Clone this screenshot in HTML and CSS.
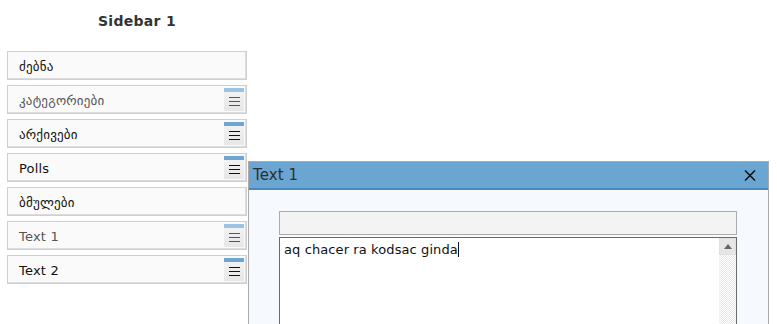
FILE: index.html
```html
<!DOCTYPE html>
<html>
<head>
<meta charset="utf-8">
<link rel="stylesheet" href="styles.css">
</head>
<body>
<div class="sidebar">
  <h2 class="title">Sidebar 1</h2>
  <ul class="widgets">
    <li class="widget"><span class="label">ძებნა</span></li>
    <li class="widget muted"><span class="label">კატეგორიები</span><span class="handle"><span class="bar"></span><span class="grip"><i></i><i></i><i></i></span></span></li>
    <li class="widget"><span class="label">არქივები</span><span class="handle"><span class="bar"></span><span class="grip"><i></i><i></i><i></i></span></span></li>
    <li class="widget"><span class="label">Polls</span><span class="handle"><span class="bar"></span><span class="grip"><i></i><i></i><i></i></span></span></li>
    <li class="widget"><span class="label">ბმულები</span></li>
    <li class="widget muted"><span class="label">Text 1</span><span class="handle"><span class="bar"></span><span class="grip"><i></i><i></i><i></i></span></span></li>
    <li class="widget"><span class="label">Text 2</span><span class="handle"><span class="bar"></span><span class="grip"><i></i><i></i><i></i></span></span></li>
  </ul>
</div>

<div class="dialog">
  <div class="dialog-head">
    <span class="dialog-title">Text 1</span>
    <svg class="close" width="12" height="11" viewBox="0 0 12 11"><path d="M1 0.5 L11 10.5 M11 0.5 L1 10.5" stroke="#111" stroke-width="1.5" fill="none"/></svg>
  </div>
  <div class="dialog-body">
    <div class="field"></div>
    <div class="area">
      <div class="area-text">aq chacer ra kodsac ginda<span class="caret"></span></div>
      <div class="scroll">
        <div class="scroll-up"><svg width="8" height="5" viewBox="0 0 8 5"><path d="M0 5 L4 0 L8 5 Z" fill="#666"/></svg></div>
        <div class="scroll-track"></div>
      </div>
    </div>
  </div>
</div>
</body>
</html>
```
FILE: styles.css
```css
html, body {
  margin: 0;
  padding: 0;
  height: 324px;
  background: #fff;
  font-family: "DejaVu Sans", Verdana, sans-serif;
  overflow: hidden;
}

.sidebar {
  width: 240px;
  margin-left: 7px;
}

.title {
  margin: 0;
  padding: 13px 0 0 20px;
  height: 38px;
  box-sizing: border-box;
  text-align: center;
  font-size: 14px;
  font-weight: bold;
  color: #333;
  letter-spacing: 0.3px;
  line-height: 17px;
}

.widgets {
  list-style: none;
  margin: 13px 0 0;
  padding: 0;
  display: flex;
  flex-direction: column;
  gap: 5px;
}

.widget {
  height: 29px;
  box-sizing: border-box;
  border: 1px solid #cfcfcf;
  box-shadow: inset -1px -1px 0 #dcdcdc;
  background: #fafafa;
  display: flex;
  align-items: center;
  justify-content: space-between;
  padding: 0 2px 0 11px;
}

.label {
  font-size: 13px;
  color: #111;
  letter-spacing: 0.2px;
  padding-top: 1px;
}

.muted .label {
  color: #555;
}

.handle {
  align-self: flex-start;
  margin-top: 2px;
  width: 20px;
  display: flex;
  flex-direction: column;
}

.bar {
  height: 4px;
  background: #6fa5d3;
}

.muted .bar {
  background: #9dc3e4;
}

.grip {
  height: 19px;
  background: linear-gradient(#f2f2f2, #e6e6e6);
  display: flex;
  flex-direction: column;
  align-items: center;
  justify-content: center;
  gap: 3px;
}

.grip i {
  display: block;
  width: 11px;
  height: 1px;
  background: #111;
}

.muted .grip i {
  background: #555;
}

.dialog {
  position: absolute;
  left: 248px;
  top: 161px;
  width: 521px;
  height: 163px;
  box-sizing: border-box;
  border: 1px solid #aaa;
  border-bottom: none;
  background: #f6fafe;
  display: flex;
  flex-direction: column;
}

.dialog-head {
  height: 28px;
  flex: none;
  box-sizing: border-box;
  background: #6ba5d2;
  border-bottom: 2px solid #4a89bf;
  display: flex;
  align-items: center;
  justify-content: space-between;
  padding: 0 12px 0 4px;
}

.dialog-title {
  font-size: 15px;
  color: #2e2e2e;
  line-height: 18px;
  letter-spacing: 0.1px;
}

.close {
  display: block;
}

.dialog-body {
  flex: 1;
  min-height: 0;
  padding: 21px 31px 0 30px;
  display: flex;
  flex-direction: column;
  gap: 2px;
}

.field {
  height: 24px;
  flex: none;
  box-sizing: border-box;
  border: 1px solid #ababab;
  background: #f3f3f3;
}

.area {
  flex: 1;
  min-height: 0;
  box-sizing: border-box;
  border: 1px solid #6a6a6a;
  border-bottom: none;
  background: #fff;
  display: flex;
}

.area-text {
  flex: 1;
  font-size: 13px;
  color: #111;
  padding: 4px 0 0 4px;
  line-height: 16px;
  letter-spacing: 0.1px;
}

.caret {
  display: inline-block;
  width: 1px;
  height: 15px;
  background: #111;
  vertical-align: -3px;
}

.scroll {
  width: 17px;
  display: flex;
  flex-direction: column;
}

.scroll-up {
  height: 17px;
  background: #e6e6e6;
  border: 1px solid #e0e0e0;
  box-sizing: border-box;
  display: flex;
  align-items: center;
  justify-content: center;
}

.scroll-track {
  flex: 1;
  background-color: #fff;
  background-image:
    linear-gradient(45deg, #e8e8e8 25%, transparent 25%, transparent 75%, #e8e8e8 75%),
    linear-gradient(45deg, #e8e8e8 25%, transparent 25%, transparent 75%, #e8e8e8 75%);
  background-size: 2px 2px;
  background-position: 0 0, 1px 1px;
}
```
